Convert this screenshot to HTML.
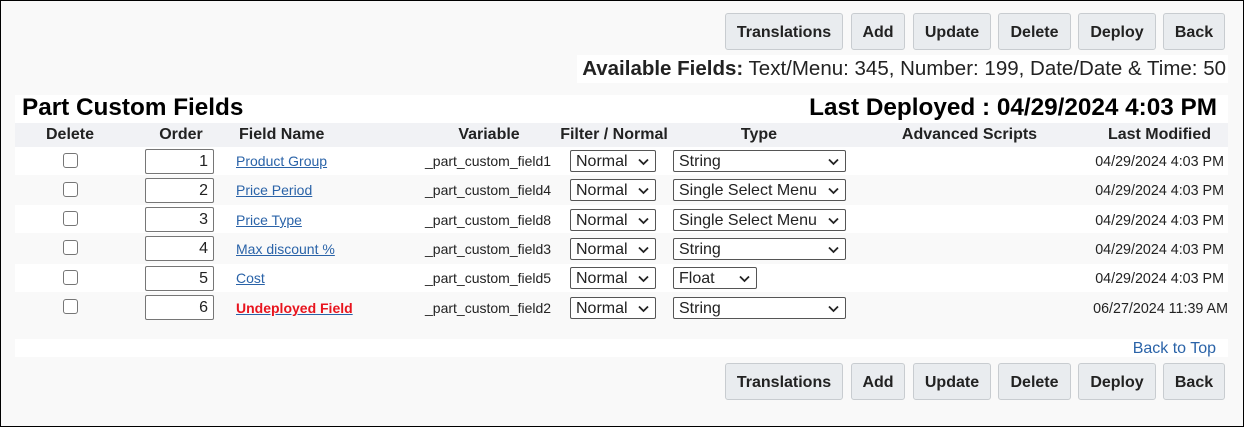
<!DOCTYPE html>
<html><head><meta charset="utf-8"><style>
*{box-sizing:border-box;margin:0;padding:0}
body{width:1244px;height:427px;background:#f9f9f9;font-family:"Liberation Sans",Arial,sans-serif;color:#222;position:relative;overflow:hidden}
.frame{position:absolute;left:0;top:0;width:1244px;height:427px;border:1px solid #000}
.a{position:absolute;white-space:nowrap}
.btn{position:absolute;height:37px;background:#e9ecef;border:1px solid #c8ccd0;border-radius:3px;font-weight:bold;font-size:16px;line-height:38px;text-align:center;color:#222}
.row{position:absolute;left:15px;width:1213px;height:28px}
.hd{font-weight:bold;font-size:16px;color:#222;text-align:center}
.cb{position:absolute;left:63px;width:15px;height:15px;border:1px solid #767676;border-radius:3px;background:#fff}
.ord{position:absolute;left:145px;width:69px;height:25px;border:1px solid #767676;border-radius:2px;background:#fff;font-size:16px;text-align:right;padding-right:5px;line-height:23px}
.lnk{position:absolute;left:236px;font-size:14px;color:#2a63a8;text-decoration:underline}
.var{position:absolute;left:425px;font-size:14px}
.sel{position:absolute;height:22px;border:1px solid #555;border-radius:2px;background:#fff;font-size:16px;line-height:22px;padding-left:5px}
.sel svg{position:absolute;right:6px;top:7px}
.dt{position:absolute;right:20px;font-size:14.3px;text-align:right}
</style></head><body>
<div class="frame"></div>
<div class="btn" style="left:725px;top:13px;width:118px">Translations</div>
<div class="btn" style="left:851px;top:13px;width:54px">Add</div>
<div class="btn" style="left:913px;top:13px;width:78px">Update</div>
<div class="btn" style="left:998px;top:13px;width:73px">Delete</div>
<div class="btn" style="left:1078px;top:13px;width:78px">Deploy</div>
<div class="btn" style="left:1163px;top:13px;width:62px">Back</div>
<div class="a" style="left:577px;top:55px;width:651px;height:28px;background:#fff"></div>
<div class="a" style="right:18px;top:57px;font-size:20.5px"><b>Available Fields:</b> Text/Menu: 345, Number: 199, Date/Date &amp; Time: 50</div>
<div class="a" style="left:15px;top:95px;width:1213px;height:28px;background:#fff"></div>
<div class="a" style="left:22px;top:94px;font-size:24.3px;font-weight:bold;color:#000">Part Custom Fields</div>
<div class="a" style="right:27px;top:94px;font-size:24.3px;font-weight:bold;color:#000">Last Deployed : 04/29/2024 4:03 PM</div>
<div class="row" style="top:123px;background:#f1f2f5"></div>
<div class="a hd" style="left:15px;top:126px;width:110px">Delete</div>
<div class="a hd" style="left:126px;top:126px;width:110px">Order</div>
<div class="a hd" style="left:239px;top:126px;text-align:left">Field Name</div>
<div class="a hd" style="left:421px;top:126px;width:136px">Variable</div>
<div class="a hd" style="left:558px;top:126px;width:112px">Filter / Normal</div>
<div class="a hd" style="left:669px;top:126px;width:180px">Type</div>
<div class="a hd" style="left:849px;top:126px;width:241px">Advanced Scripts</div>
<div class="a hd" style="left:1091px;top:126px;width:137px">Last Modified</div>

<div class="row" style="top:147px;background:#fff"></div>
<div class="row" style="top:205px;background:#fff"></div>
<div class="row" style="top:264px;background:#fff"></div>

<div class="cb" style="top:153px"></div><div class="ord" style="top:149px">1</div><div class="a lnk" style="top:153px">Product Group</div><div class="a var" style="top:153px">_part_custom_field1</div>
<div class="sel" style="left:570px;top:150px;width:86px">Normal<svg width="11" height="8"><path d="M1 1.5l4.5 4.5 4.5-4.5" fill="none" stroke="#222" stroke-width="1.8"/></svg></div>
<div class="sel" style="left:673px;top:150px;width:173px">String<svg width="11" height="8"><path d="M1 1.5l4.5 4.5 4.5-4.5" fill="none" stroke="#222" stroke-width="1.8"/></svg></div>
<div class="a dt" style="top:154px">04/29/2024 4:03 PM</div>

<div class="cb" style="top:182px"></div><div class="ord" style="top:178px">2</div><div class="a lnk" style="top:182px">Price Period</div><div class="a var" style="top:182px">_part_custom_field4</div>
<div class="sel" style="left:570px;top:179px;width:86px">Normal<svg width="11" height="8"><path d="M1 1.5l4.5 4.5 4.5-4.5" fill="none" stroke="#222" stroke-width="1.8"/></svg></div>
<div class="sel" style="left:673px;top:179px;width:173px">Single Select Menu<svg width="11" height="8"><path d="M1 1.5l4.5 4.5 4.5-4.5" fill="none" stroke="#222" stroke-width="1.8"/></svg></div>
<div class="a dt" style="top:183px">04/29/2024 4:03 PM</div>

<div class="cb" style="top:211px"></div><div class="ord" style="top:207px">3</div><div class="a lnk" style="top:212px">Price Type</div><div class="a var" style="top:212px">_part_custom_field8</div>
<div class="sel" style="left:570px;top:209px;width:86px">Normal<svg width="11" height="8"><path d="M1 1.5l4.5 4.5 4.5-4.5" fill="none" stroke="#222" stroke-width="1.8"/></svg></div>
<div class="sel" style="left:673px;top:209px;width:173px">Single Select Menu<svg width="11" height="8"><path d="M1 1.5l4.5 4.5 4.5-4.5" fill="none" stroke="#222" stroke-width="1.8"/></svg></div>
<div class="a dt" style="top:213px">04/29/2024 4:03 PM</div>

<div class="cb" style="top:240px"></div><div class="ord" style="top:236px">4</div><div class="a lnk" style="top:241px">Max discount %</div><div class="a var" style="top:241px">_part_custom_field3</div>
<div class="sel" style="left:570px;top:238px;width:86px">Normal<svg width="11" height="8"><path d="M1 1.5l4.5 4.5 4.5-4.5" fill="none" stroke="#222" stroke-width="1.8"/></svg></div>
<div class="sel" style="left:673px;top:238px;width:173px">String<svg width="11" height="8"><path d="M1 1.5l4.5 4.5 4.5-4.5" fill="none" stroke="#222" stroke-width="1.8"/></svg></div>
<div class="a dt" style="top:242px">04/29/2024 4:03 PM</div>

<div class="cb" style="top:270px"></div><div class="ord" style="top:266px">5</div><div class="a lnk" style="top:270px">Cost</div><div class="a var" style="top:270px">_part_custom_field5</div>
<div class="sel" style="left:570px;top:267px;width:86px">Normal<svg width="11" height="8"><path d="M1 1.5l4.5 4.5 4.5-4.5" fill="none" stroke="#222" stroke-width="1.8"/></svg></div>
<div class="sel" style="left:673px;top:267px;width:84px">Float<svg width="11" height="8"><path d="M1 1.5l4.5 4.5 4.5-4.5" fill="none" stroke="#222" stroke-width="1.8"/></svg></div>
<div class="a dt" style="top:271px">04/29/2024 4:03 PM</div>

<div class="cb" style="top:299px"></div><div class="ord" style="top:295px">6</div><div class="a lnk" style="top:300px;color:#e8141e;font-weight:bold;text-decoration-color:#2a63a8">Undeployed Field</div><div class="a var" style="top:300px">_part_custom_field2</div>
<div class="sel" style="left:570px;top:297px;width:86px">Normal<svg width="11" height="8"><path d="M1 1.5l4.5 4.5 4.5-4.5" fill="none" stroke="#222" stroke-width="1.8"/></svg></div>
<div class="sel" style="left:673px;top:297px;width:173px">String<svg width="11" height="8"><path d="M1 1.5l4.5 4.5 4.5-4.5" fill="none" stroke="#222" stroke-width="1.8"/></svg></div>
<div class="a dt" style="top:301px;right:16px">06/27/2024 11:39 AM</div>

<div class="row" style="top:339px;height:18px;background:#fff"></div>
<div class="a" style="right:28px;top:340px;font-size:16px;color:#2a63a8">Back to Top</div>

<div class="btn" style="left:725px;top:363px;width:118px">Translations</div>
<div class="btn" style="left:851px;top:363px;width:54px">Add</div>
<div class="btn" style="left:913px;top:363px;width:78px">Update</div>
<div class="btn" style="left:998px;top:363px;width:73px">Delete</div>
<div class="btn" style="left:1078px;top:363px;width:78px">Deploy</div>
<div class="btn" style="left:1163px;top:363px;width:62px">Back</div>
</body></html>
